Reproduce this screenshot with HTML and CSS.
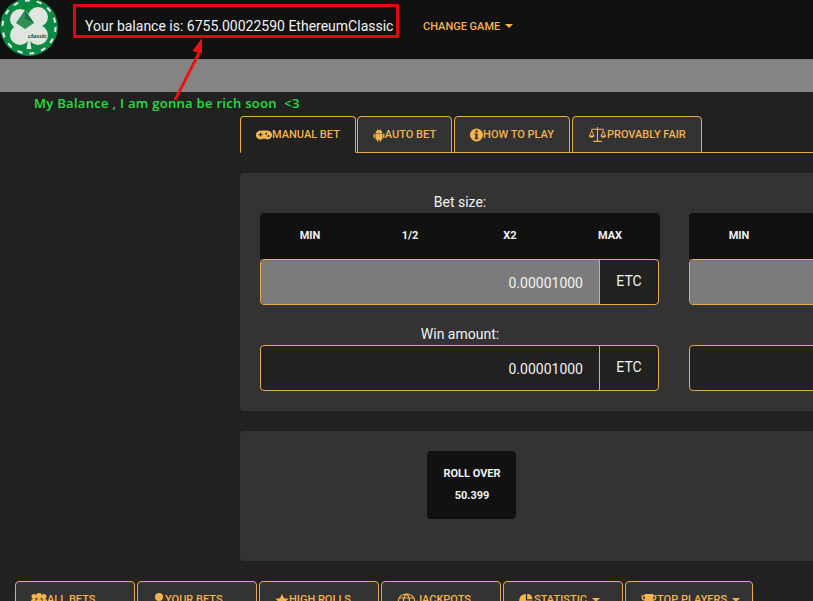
FILE: index.html
```html
<!DOCTYPE html>
<html lang="en">
<head>
<meta charset="utf-8">
<title>Dice</title>
<link rel="stylesheet" href="styles.css">
</head>
<body>
<div class="page">
  <header class="topbar">
    <svg class="logo" viewBox="0 0 58 58" width="58" height="58">
      <circle cx="29" cy="29" r="29" fill="#0c8a42"/>
      <circle cx="29" cy="29" r="26.500" fill="none" stroke="#f2f2f2" stroke-width="2" stroke-dasharray="5 7"/>
      <g fill="#dfe6e0">
        <circle cx="20" cy="21" r="10"/>
        <circle cx="38" cy="19" r="10"/>
        <circle cx="20" cy="37" r="10"/>
        <circle cx="38" cy="37" r="10"/>
        <rect x="22" y="20" width="14" height="18"/>
        <path d="M29 36l-2.500 15h5z"/>
      </g>
      <path d="M25 12l9 13-9 6-9-6z" fill="#2f8f55"/>
      <path d="M25 12l9 13-9-4z" fill="#1d6e3d"/>
      <text class="logo-text" x="28" y="40">classic</text>
    </svg>
    <div class="balance">Your balance is: 6755.00022590 EthereumClassic</div>
    <a class="change-game">CHANGE GAME<span class="caret"></span></a>
  </header>
  <div class="banner"></div>

  <main class="game">
    <nav class="tabs">
      <a class="tab tab-active">
        <svg class="ico ico-16" viewBox="0 0 18 12"><path fill-rule="evenodd" d="M5 1h8a5 5 0 1 1-2.500 9.300H7.500A5 5 0 1 1 5 1zM3 5v1.200h1.500V7.700h1.200V6.200h1.500V5H5.700V3.500H4.500V5zM12.500 4.500a1 1 0 1 0 0 .1zM15 7a1 1 0 1 0 0 .1z"/></svg>MANUAL BET</a>
      <a class="tab">
        <svg class="ico ico-12" viewBox="0 0 14 18"><path d="M2.500 7.500h9V14a1 1 0 0 1-1 1h-1v2.500H7.800V15H6.200v2.500H4.500V15h-1a1 1 0 0 1-1-1zM0 7.500h1.700V13H0zM12.300 7.500H14V13h-1.700zM2.500 6.800C2.700 4.800 4 3.500 5 3L4 1.300l.5-.3 1 1.700a5 5 0 0 1 3 0l1-1.700.5.300L9 3c1 .5 2.300 1.800 2.500 3.800z"/></svg>AUTO BET</a>
      <a class="tab">
        <svg class="ico ico-13" viewBox="0 0 14 14"><path fill-rule="evenodd" d="M7 0a7 7 0 1 1 0 14A7 7 0 0 1 7 0zM5.800 2v2.200h2.400V2zM5 5.500v1.300h.8v3.500H5v1.300h4v-1.300h-.8V5.500z"/></svg>HOW TO PLAY</a>
      <a class="tab">
        <svg class="ico ico-19 ico-tall" viewBox="0 0 18 16"><path d="M8.500 1h1v1.500H15v1H9.500V14H13v1H5v-1h3.500V3.500H3v-1h5.500z"/><path d="M3.500 3.500L.8 9.500a2.800 2.300 0 0 0 5.400 0zM3.500 5.500L5 9H2zM14.500 3.500l-2.700 6a2.800 2.300 0 0 0 5.400 0zM14.500 5.500L16 9h-3z" fill-rule="evenodd"/></svg>PROVABLY FAIR</a>
    </nav>

    <section class="panel panel-bets">
      <div class="bet-col">
        <h4 class="field-label">Bet size:</h4>
        <div class="quick">
          <button class="quick-btn">MIN</button><button class="quick-btn">1/2</button><button class="quick-btn">X2</button><button class="quick-btn">MAX</button>
        </div>
        <div class="input-group">
          <div class="value value-gray">0.00001000</div>
          <div class="addon">ETC</div>
        </div>
        <h4 class="field-label label-win">Win amount:</h4>
        <div class="input-group">
          <div class="value">0.00001000</div>
          <div class="addon">ETC</div>
        </div>
      </div>
      <div class="bet-col">
        <h4 class="field-label">&nbsp;</h4>
        <div class="quick">
          <button class="quick-btn">MIN</button><button class="quick-btn">&nbsp;</button><button class="quick-btn">&nbsp;</button><button class="quick-btn">&nbsp;</button>
        </div>
        <div class="input-group">
          <div class="value value-gray">&nbsp;</div>
          <div class="addon">&nbsp;</div>
        </div>
        <h4 class="field-label label-win">&nbsp;</h4>
        <div class="input-group">
          <div class="value">&nbsp;</div>
          <div class="addon">&nbsp;</div>
        </div>
      </div>
    </section>

    <section class="panel panel-roll">
      <div class="roll-box">
        <div>ROLL OVER</div>
        <div>50.399</div>
      </div>
    </section>
  </main>

  <nav class="tabs tabs-bottom">
    <a class="tab wide">
      <svg class="ico ico-16" viewBox="0 0 16 14"><circle cx="3" cy="3.500" r="2.500"/><circle cx="13" cy="3.500" r="2.500"/><circle cx="8" cy="3" r="3"/><path d="M0 12V8q0-2 2-2h2.500v8H1zM16 12V8q0-2-2-2h-2.500v8H15zM5 14V8q0-2 2-2h2q2 0 2 2v6z"/></svg>ALL BETS</a>
    <a class="tab wide">
      <svg class="ico ico-12" viewBox="0 0 12 14"><circle cx="6" cy="4" r="4"/><path d="M0 14v-2q0-3.500 3-3.500h6q3 0 3 3.500v2z"/></svg>YOUR BETS</a>
    <a class="tab wide">
      <svg class="ico ico-14" viewBox="0 0 16 15"><path d="M8 .5l2.300 4.900 5.200.7-3.800 3.600 1 5.300L8 12.400l-4.700 2.600 1-5.300L.5 6.100l5.200-.7z"/></svg>HIGH ROLLS</a>
    <a class="tab wide">
      <svg class="ico ico-19" viewBox="0 0 18 14"><path fill="none" stroke="currentColor" stroke-width="1.200" d="M9 1a8 6.500 0 1 0 .01 0zM9 1c-4 3-4 10 0 13M9 1c4 3 4 10 0 13M1.500 5h15M1.500 9h15"/></svg>JACKPOTS</a>
    <a class="tab wide">
      <svg class="ico ico-15" viewBox="0 0 16 16"><path d="M7.300 1v7.700H15A7.700 7.700 0 1 1 7.300 1zM8.800.8A7 7 0 0 1 15 7H8.800z"/></svg>STATISTIC<span class="caret"></span></a>
    <a class="tab wide-top">
      <svg class="ico ico-16" viewBox="0 0 18 16"><path d="M4 1h10v1.500h3.500V5q0 3.500-4.500 4-1.200 1.800-3 2v2h3v2H5v-2h3v-2q-1.800-.2-3-2Q.5 8.500.5 5V2.500H4zM2 4v1q0 1.700 2.300 2.300Q4 5.800 4 4zM16 4h-2q0 1.800-.3 3.300Q16 6.700 16 5z"/></svg>TOP PLAYERS<span class="caret"></span></a>
  </nav>

  <div class="callout"></div>
  <svg class="arrow" viewBox="0 0 60 80" width="60" height="80">
    <path d="M3 64L27 17" stroke="#ee1111" stroke-width="2.800" fill="none"/>
    <path d="M30 2L20.500 15l9.500 3z" fill="#ee1111"/>
  </svg>
  <div class="note">My Balance , I am gonna be rich soon &nbsp;&lt;3</div>
</div>
</body>
</html>
```
FILE: styles.css
```css
* { box-sizing: border-box; }
html, body { margin: 0; padding: 0; height: 100%; overflow: hidden; background: #212121; }
.page {
  position: relative;
  height: 601px;
  overflow: hidden;
  font-family: Roboto, "Liberation Sans", sans-serif;
  color: #f2f2f2;
}

/* top bar */
.topbar {
  display: flex;
  align-items: center;
  height: 59px;
  background: #111;
}
.logo { flex: none; margin-top: -5px; }
.logo-text { font: italic 700 7px "Liberation Serif", serif; fill: #1c3a28; }
.balance {
  margin-left: 27px;
  margin-top: -8px;
  font-size: 14px;
  line-height: 20px;
  white-space: nowrap;
  width: 338px;
}
.change-game {
  display: flex;
  align-items: center;
  margin-top: -7px;
  font-size: 11px;
  font-weight: 500;
  color: #f5b44c;
}
.caret {
  display: inline-block;
  margin-left: 5px;
  border-left: 4px solid transparent;
  border-right: 4px solid transparent;
  border-top: 4px solid currentColor;
}
.banner { height: 33px; background: #848484; }

/* main */
.game { padding: 24px 0 0 240px; }
.tabs {
  display: flex;
  gap: 2px;
  border-bottom: 1px solid #e8ac4e;
}
.tab {
  display: flex;
  align-items: center;
  justify-content: center;
  height: 37px;
  margin-bottom: -1px;
  padding: 0 15px;
  background: #333;
  border: 1px solid #e8ac4e;
  border-radius: 4px 4px 0 0;
  font-size: 11px;
  font-weight: 500;
  color: #f5b44c;
  white-space: nowrap;
}
.tab-active { background: #212121; border-bottom-color: #212121; margin-right: -1px; }
.ico { height: 14px; fill: currentColor; flex: none; }
.ico-12 { width: 12px; }
.ico-13 { width: 13px; }
.ico-14 { width: 14px; }
.ico-15 { width: 15px; }
.ico-16 { width: 16px; }
.ico-19 { width: 19px; }
.ico-tall { height: 17px; }

.panel { background: #333; border-radius: 4px 0 0 4px; }
.panel-bets {
  display: flex;
  gap: 29px;
  width: 860px;
  height: 238px;
  margin-top: 20px;
  padding: 20px;
}
.bet-col { flex: none; width: 400px; }
.field-label {
  margin: 0;
  height: 20px;
  font-size: 14px;
  font-weight: 400;
  line-height: 18px;
  text-align: center;
}
.quick {
  display: flex;
  height: 46px;
  background: #111;
  border-radius: 4px 4px 0 0;
}
.quick-btn {
  flex: 1;
  padding: 0 0 2px;
  background: none;
  border: 0;
  font: 700 11px Roboto, sans-serif;
  color: #f2f2f2;
}
.input-group {
  display: flex;
  width: 399px;
  height: 46px;
  background: #212121;
  border: 1px solid #e8ac4e;
  border-radius: 4px;
  font-size: 14px;
}
.value {
  flex: 1;
  padding-right: 16px;
  line-height: 46px;
  text-align: right;
  border-radius: 3px 0 0 3px;
}
.value-gray { background: #7b7b7b; }
.addon {
  flex: none;
  width: 59px;
  line-height: 42px;
  text-align: center;
  border-left: 1px solid #e8ac4e;
}
.label-win { margin-top: 20px; }

.panel-roll {
  width: 600px;
  height: 130px;
  margin-top: 20px;
  padding: 20px 0 0 187px;
}
.roll-box {
  display: flex;
  flex-direction: column;
  justify-content: center;
  gap: 9px;
  width: 89px;
  height: 68px;
  padding: 0 0 2px 1px;
  background: #111;
  border-radius: 4px;
  font-size: 11px;
  font-weight: 700;
  line-height: 13px;
  text-align: center;
}

/* bottom tabs */
.tabs-bottom {
  margin: 20px 0 0 15px;
  border-bottom: 0;
}
.wide, .wide-top { justify-content: flex-start; padding: 0 0 0 15px; }
.wide { width: 120px; }
.wide-top { width: 128px; }

/* annotation drawn over the screenshot */
.callout {
  position: absolute;
  left: 73px;
  top: 4px;
  width: 326px;
  height: 34px;
  border: 3px solid #e30613;
  border-radius: 1px;
}
.arrow { position: absolute; left: 172px; top: 36px; }
.note {
  position: absolute;
  left: 34px;
  top: 94px;
  font-family: "Open Sans", sans-serif;
  font-size: 13px;
  font-weight: 600;
  line-height: 18px;
  letter-spacing: 0.3px;
  color: #22e040;
  white-space: nowrap;
}
```
